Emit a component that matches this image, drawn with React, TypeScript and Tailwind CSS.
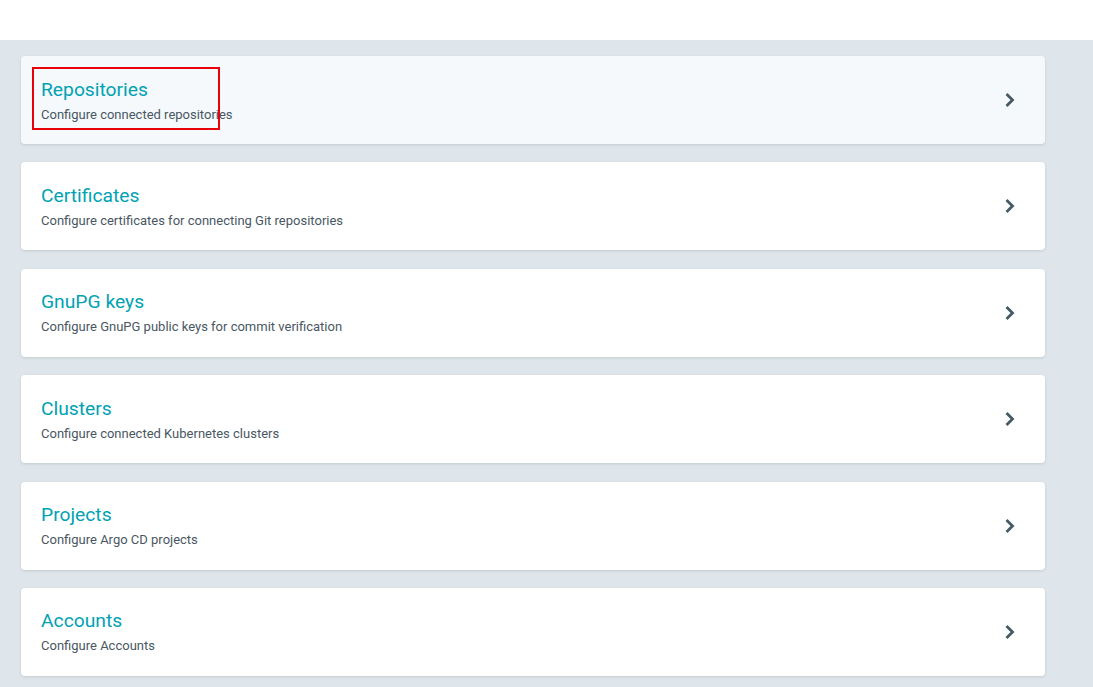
const items = [
  { title: 'Repositories', desc: 'Configure connected repositories' },
  { title: 'Certificates', desc: 'Configure certificates for connecting Git repositories' },
  { title: 'GnuPG keys', desc: 'Configure GnuPG public keys for commit verification' },
  { title: 'Clusters', desc: 'Configure connected Kubernetes clusters' },
  { title: 'Projects', desc: 'Configure Argo CD projects' },
  { title: 'Accounts', desc: 'Configure Accounts' },
]

function Chevron() {
  return (
    <svg width="10" height="14" viewBox="0 0 10 14" className="text-[#455a64]">
      <path d="M2.5 2 L7.5 7 L2.5 12" fill="none" stroke="currentColor" strokeWidth="2.8" strokeLinecap="square" strokeLinejoin="miter" />
    </svg>
  )
}

export default function App() {
  return (
    <div className="min-h-screen bg-[#dee6eb] font-['Roboto',sans-serif]">
      <div className="h-10 bg-white" />
      <div className="pl-[21px] pr-[48px] pt-4">
        {items.map((it, i) => (
          <div
            key={it.title}
            className={`relative mb-[18.4px] flex h-[88px] items-center justify-between rounded-[4px] px-5 shadow-[0_1px_3px_rgba(0,0,0,0.12)] ${i === 0 ? 'bg-[#f5f9fc]' : 'bg-white'}`}
          >
            <div className="flex flex-col">
              <span className="text-[19.25px] leading-[26px] text-[#00a2b3]">{it.title}</span>
              <span className="mt-[3px] text-[13px] leading-[18px] text-[#495763]">{it.desc}</span>
            </div>
            <div className="mr-[10px]">
              <Chevron />
            </div>
            {i === 0 && (
              <div className="pointer-events-none absolute left-[11px] top-[11px] h-[63px] w-[188px] border-2 border-[#e8000b]" />
            )}
          </div>
        ))}
      </div>
    </div>
  )
}
